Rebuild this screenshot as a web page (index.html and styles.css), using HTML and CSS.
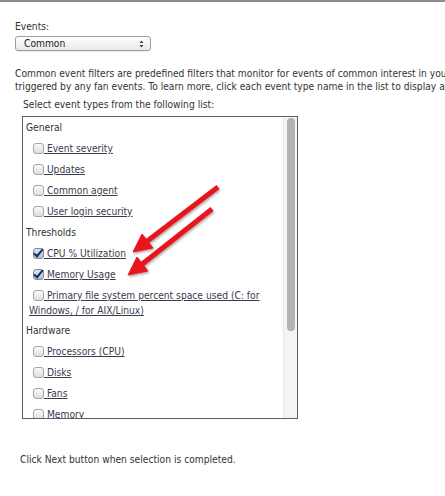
FILE: index.html
```html
<!DOCTYPE html>
<html lang="en">
<head>
    <meta charset="UTF-8">
    <meta name="viewport" content="width=device-width, initial-scale=1.0">
    <title>Event Filter</title>
    <link rel="stylesheet" href="styles.css">
</head>
<body>

    <div class="page">
        <div class="field-label">Events:</div>
        <div class="select-box">
            <span>Common</span>
            <svg class="select-arrows" width="5" height="8" viewBox="0 0 5 8">
                <path d="M0.5 3 L2.5 0.5 L4.5 3 Z M0.5 5 L2.5 7.5 L4.5 5 Z" fill="#444"/>
            </svg>
        </div>

        <p class="intro">
            Common event filters are predefined filters that monitor for events of common interest in your environment.<br>
            triggered by any fan events. To learn more, click each event type name in the list to display a description.
        </p>

        <div class="list-label">Select event types from the following list:</div>

        <div class="event-list">
            <div class="event-items">
                <div class="group">General</div>
                <div class="item"><span class="check"></span><a href="#">&nbsp;Event severity</a></div>
                <div class="item"><span class="check"></span><a href="#">&nbsp;Updates</a></div>
                <div class="item"><span class="check"></span><a href="#">&nbsp;Common agent</a></div>
                <div class="item"><span class="check"></span><a href="#">&nbsp;User login security</a></div>

                <div class="group">Thresholds</div>
                <div class="item"><span class="check checked"></span><a href="#">&nbsp;CPU % Utilization</a></div>
                <div class="item"><span class="check checked"></span><a href="#">&nbsp;Memory Usage</a></div>
                <div class="item wrap"><span class="check"></span><a href="#">&nbsp;Primary file system percent space used (C: for Windows, / for AIX/Linux)</a></div>

                <div class="group">Hardware</div>
                <div class="item"><span class="check"></span><a href="#">&nbsp;Processors (CPU)</a></div>
                <div class="item"><span class="check"></span><a href="#">&nbsp;Disks</a></div>
                <div class="item"><span class="check"></span><a href="#">&nbsp;Fans</a></div>
                <div class="item"><span class="check"></span><a href="#">&nbsp;Memory</a></div>
            </div>
            <div class="scrollbar">
                <div class="thumb"></div>
            </div>
        </div>

        <div class="footer-note">Click Next button when selection is completed.</div>
    </div>

    <!-- annotation arrows drawn over the list -->
    <svg class="arrows" width="445" height="496" viewBox="0 0 445 496">
        <defs>
            <filter id="shadow" x="-20%" y="-20%" width="140%" height="140%">
                <feDropShadow dx="1" dy="1.5" stdDeviation="1.2" flood-color="#000" flood-opacity="0.35"/>
            </filter>
        </defs>
        <g fill="#e8151b" stroke="#e8151b" filter="url(#shadow)">
            <line x1="218" y1="187" x2="146" y2="242" stroke-width="5"/>
            <polygon points="133,252 153,248 142,234" stroke-width="1" stroke-linejoin="round"/>
            <line x1="212" y1="209" x2="141" y2="265" stroke-width="5"/>
            <polygon points="128,275 148,271 137,257" stroke-width="1" stroke-linejoin="round"/>
        </g>
    </svg>

</body>
</html>
```

FILE: styles.css
```css
body {
    font-family: "DejaVu Sans Condensed", "DejaVu Sans", sans-serif;
    font-size: 10.2px;
    color: #333;
    background-color: #fff;
    margin: 0;
    border-top: 2px solid #8c8c8c;
    width: 445px;
    height: 494px;
    overflow: hidden;
    position: relative;
}

.page {
    padding: 0 15px;
}

.field-label {
    margin-top: 18px;
    line-height: 13px;
}

.select-box {
    display: flex;
    align-items: center;
    justify-content: space-between;
    width: 120px;
    height: 13px;
    margin-top: 3px;
    padding: 0 6px 0 8px;
    border: 1px solid #9d9d9d;
    border-radius: 3px;
    background: linear-gradient(#ffffff, #e9e9e9);
    box-shadow: 0 1px 1px rgba(0, 0, 0, 0.08);
    color: #222;
}

.intro {
    margin: 16px 0 0;
    line-height: 13px;
    white-space: nowrap;
}

.list-label {
    margin: 5px 0 0 8px;
    line-height: 13px;
}

.event-list {
    display: flex;
    width: 274px;
    height: 301px;
    margin: 5px 0 0 7px;
    border: 1px solid #5b5e70;
    overflow: hidden;
}

.event-items {
    flex: 1;
    padding-left: 3px;
}

.group {
    height: 21px;
    line-height: 21px;
}

.item {
    padding-left: 3px;
    line-height: 21px;
}

.item.wrap {
    line-height: 15px;
    padding-top: 3px;
    padding-bottom: 2px;
}

.item a {
    color: #3a3b4c;
    text-decoration: underline;
}

.check {
    display: inline-block;
    width: 9px;
    height: 9px;
    margin-left: 4px;
    vertical-align: -2px;
    border: 1px solid #a4a4a4;
    border-radius: 3px;
    background: linear-gradient(#fbfbfb, #dedede);
}

.check.checked {
    position: relative;
    border-color: #7d8ca6;
    background: linear-gradient(#dbe6f4, #a9bfdc);
}

.check.checked::after {
    content: "";
    position: absolute;
    left: 2px;
    top: -2px;
    width: 3px;
    height: 8px;
    border-right: 2.5px solid #1f2a48;
    border-bottom: 2.5px solid #1f2a48;
    transform: rotate(40deg);
}

.scrollbar {
    width: 13px;
    background-color: #f4f4f4;
    border-left: 1px solid #e8e8e8;
}

.thumb {
    width: 8px;
    height: 213px;
    margin: 1px 0 0 3px;
    border-radius: 4px;
    background-color: #b3b3b3;
}

.footer-note {
    margin: 34px 0 0 5px;
    line-height: 13px;
}

.arrows {
    position: absolute;
    top: -2px;
    left: 0;
    pointer-events: none;
}
```
